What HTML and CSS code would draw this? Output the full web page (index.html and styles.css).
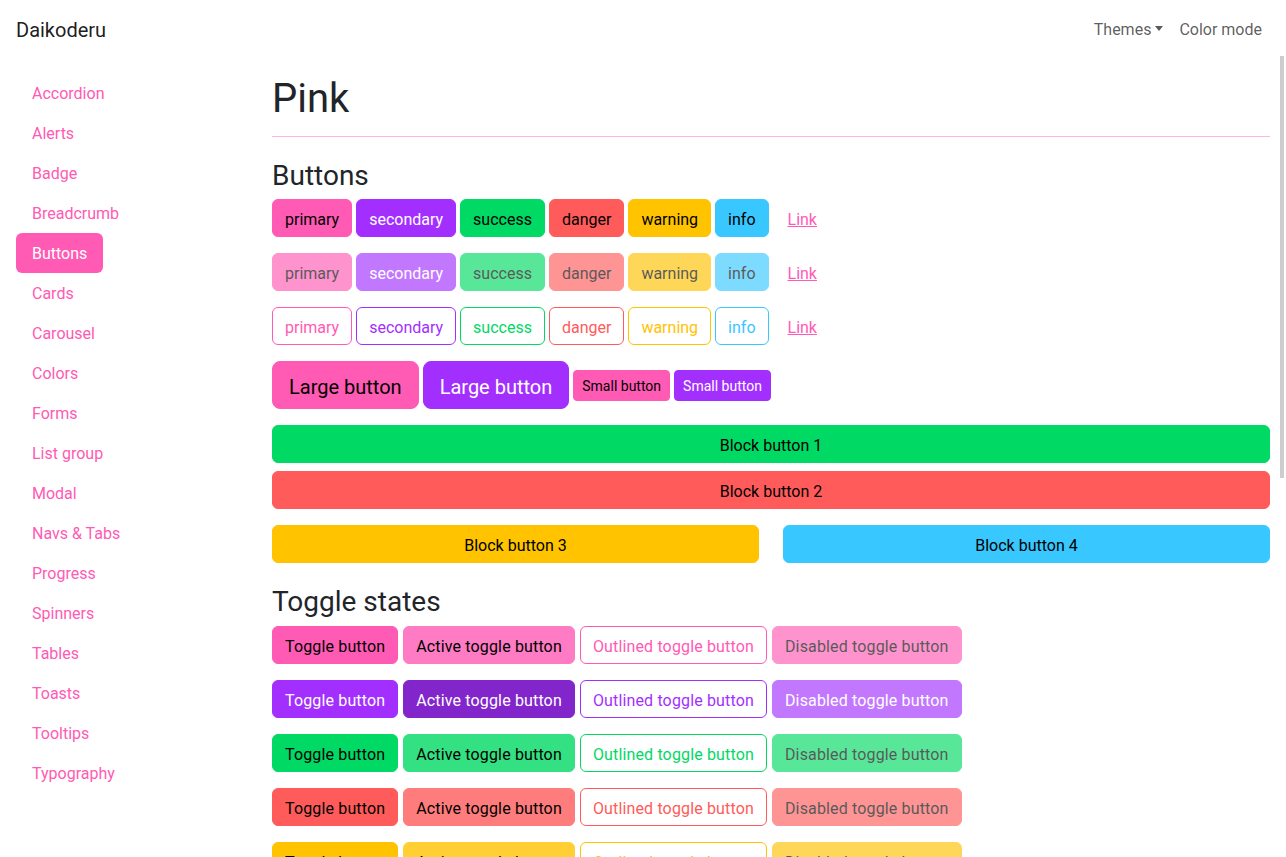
FILE: index.html
```html
<!DOCTYPE html>
<html lang="en">
<head>
<meta charset="utf-8">
<title>Daikoderu – Pink</title>
<link rel="stylesheet" href="styles.css">
</head>
<body>
<header class="navbar">
  <a class="brand" href="#">Daikoderu</a>
  <nav class="topnav">
    <a class="nav-link dropdown-toggle" href="#">Themes</a>
    <a class="nav-link" href="#">Color mode</a>
  </nav>
</header>
<div class="layout">
  <aside class="sidebar">
    <a class="side-link" href="#">Accordion</a>
    <a class="side-link" href="#">Alerts</a>
    <a class="side-link" href="#">Badge</a>
    <a class="side-link" href="#">Breadcrumb</a>
    <a class="side-link active" href="#">Buttons</a>
    <a class="side-link" href="#">Cards</a>
    <a class="side-link" href="#">Carousel</a>
    <a class="side-link" href="#">Colors</a>
    <a class="side-link" href="#">Forms</a>
    <a class="side-link" href="#">List group</a>
    <a class="side-link" href="#">Modal</a>
    <a class="side-link" href="#">Navs &amp; Tabs</a>
    <a class="side-link" href="#">Progress</a>
    <a class="side-link" href="#">Spinners</a>
    <a class="side-link" href="#">Tables</a>
    <a class="side-link" href="#">Toasts</a>
    <a class="side-link" href="#">Tooltips</a>
    <a class="side-link" href="#">Typography</a>
  </aside>
  <main class="content">
    <h1 class="title">Pink</h1>
    <hr class="rule">

    <h3 class="section first">Buttons</h3>
    <div class="btn-row">
      <button class="btn solid c-primary">primary</button>
      <button class="btn solid c-secondary">secondary</button>
      <button class="btn solid c-success">success</button>
      <button class="btn solid c-danger">danger</button>
      <button class="btn solid c-warning">warning</button>
      <button class="btn solid c-info">info</button>
      <a class="btn link" href="#">Link</a>
    </div>
    <div class="btn-row">
      <button class="btn solid c-primary disabled">primary</button>
      <button class="btn solid c-secondary disabled">secondary</button>
      <button class="btn solid c-success disabled">success</button>
      <button class="btn solid c-danger disabled">danger</button>
      <button class="btn solid c-warning disabled">warning</button>
      <button class="btn solid c-info disabled">info</button>
      <a class="btn link" href="#">Link</a>
    </div>
    <div class="btn-row">
      <button class="btn outline c-primary">primary</button>
      <button class="btn outline c-secondary">secondary</button>
      <button class="btn outline c-success">success</button>
      <button class="btn outline c-danger">danger</button>
      <button class="btn outline c-warning">warning</button>
      <button class="btn outline c-info">info</button>
      <a class="btn link" href="#">Link</a>
    </div>
    <div class="btn-row sizes">
      <button class="btn solid c-primary lg">Large button</button>
      <button class="btn solid c-secondary lg">Large button</button>
      <button class="btn solid c-primary sm">Small button</button>
      <button class="btn solid c-secondary sm">Small button</button>
    </div>
    <div class="block-stack">
      <button class="btn solid c-success block">Block button 1</button>
      <button class="btn solid c-danger block">Block button 2</button>
    </div>
    <div class="block-pair">
      <button class="btn solid c-warning block">Block button 3</button>
      <button class="btn solid c-info block">Block button 4</button>
    </div>

    <h3 class="section">Toggle states</h3>
    <div class="btn-row toggles">
      <button class="btn solid c-primary">Toggle button</button>
      <button class="btn solid c-primary act">Active toggle button</button>
      <button class="btn outline c-primary">Outlined toggle button</button>
      <button class="btn solid c-primary disabled">Disabled toggle button</button>
    </div>
    <div class="btn-row toggles">
      <button class="btn solid c-secondary">Toggle button</button>
      <button class="btn solid c-secondary act">Active toggle button</button>
      <button class="btn outline c-secondary">Outlined toggle button</button>
      <button class="btn solid c-secondary disabled">Disabled toggle button</button>
    </div>
    <div class="btn-row toggles">
      <button class="btn solid c-success">Toggle button</button>
      <button class="btn solid c-success act">Active toggle button</button>
      <button class="btn outline c-success">Outlined toggle button</button>
      <button class="btn solid c-success disabled">Disabled toggle button</button>
    </div>
    <div class="btn-row toggles">
      <button class="btn solid c-danger">Toggle button</button>
      <button class="btn solid c-danger act">Active toggle button</button>
      <button class="btn outline c-danger">Outlined toggle button</button>
      <button class="btn solid c-danger disabled">Disabled toggle button</button>
    </div>
    <div class="btn-row toggles">
      <button class="btn solid c-warning">Toggle button</button>
      <button class="btn solid c-warning act">Active toggle button</button>
      <button class="btn outline c-warning">Outlined toggle button</button>
      <button class="btn solid c-warning disabled">Disabled toggle button</button>
    </div>
    <div class="btn-row toggles">
      <button class="btn solid c-info">Toggle button</button>
      <button class="btn solid c-info act">Active toggle button</button>
      <button class="btn outline c-info">Outlined toggle button</button>
      <button class="btn solid c-info disabled">Disabled toggle button</button>
    </div>

    <h3 class="section">Button group</h3>
    <div class="btn-row">
      <button class="btn solid c-primary">Left</button>
      <button class="btn solid c-primary">Middle</button>
      <button class="btn solid c-primary">Right</button>
    </div>
    <div class="btn-row">
      <button class="btn outline c-secondary">Left</button>
      <button class="btn outline c-secondary">Middle</button>
      <button class="btn outline c-secondary">Right</button>
    </div>
    <div class="spacer"></div>
  </main>
  <div class="scroll-thumb" aria-hidden="true"></div>
</div>
</body>
</html>
```

FILE: styles.css
```css
* { box-sizing: border-box; }

html, body {
  margin: 0;
  height: 100%;
}

body {
  font-family: Roboto, "Liberation Sans", sans-serif;
  font-size: 16px;
  line-height: 1.5;
  color: #212529;
  background: #fff;
  display: flex;
  flex-direction: column;
  overflow: hidden;
}

a { text-decoration: none; }

/* Navbar */
.navbar {
  height: 56px;
  flex: 0 0 56px;
  display: flex;
  align-items: center;
  justify-content: space-between;
  padding: 0 16px;
}

.brand {
  font-size: 20px;
  line-height: 30px;
  padding-top: 4px;
  color: rgba(0, 0, 0, 0.9);
}

.topnav {
  display: flex;
  align-items: center;
}

.nav-link {
  color: rgba(0, 0, 0, 0.65);
  padding: 10px 8px 6px;
  line-height: 24px;
}

.dropdown-toggle::after {
  content: "";
  display: inline-block;
  margin-left: 4px;
  vertical-align: 4px;
  border-top: 5px solid;
  border-left: 4px solid transparent;
  border-right: 4px solid transparent;
}

/* Layout */
.layout {
  flex: 1;
  display: flex;
  min-height: 0;
  position: relative;
}

.sidebar {
  flex: 0 0 256px;
  display: flex;
  flex-direction: column;
  align-items: flex-start;
  padding: 17px 0 0 16px;
}

.side-link {
  color: #ff5ab4;
  padding: 9px 16px 7px;
  line-height: 24px;
  border-radius: 6px;
}

.side-link.active {
  background: #ff5ab4;
  color: #fff;
}

.content {
  flex: 1;
  overflow-y: auto;
  scrollbar-width: none;
  padding: 19px 16px 0 16px;
}

.content::-webkit-scrollbar { display: none; }

/* overlay scrollbar indicator of the content pane */
.scroll-thumb {
  position: absolute;
  top: 0;
  right: 2px;
  width: 4px;
  height: 422px;
  background: #cdcdcd;
}

.title {
  font-size: 40px;
  font-weight: 400;
  line-height: 48px;
  margin: 0;
}

.rule {
  border: 0;
  border-top: 1px solid #ffb5df;
  margin: 13px 0 0;
}

.section {
  font-size: 28px;
  font-weight: 400;
  line-height: 33.6px;
  margin: 22px 0 7px;
}

.section.first { margin-top: 21.6px; }

/* Buttons */
.btn-row {
  display: flex;
  align-items: center;
  gap: 4px;
  margin-bottom: 16px;
}

.btn-row.toggles { gap: 5px; }
.btn-row.toggles .btn { letter-spacing: 0.15px; }

.btn {
  font-family: inherit;
  font-size: 16px;
  line-height: 24px;
  padding: 8px 12px 4px;
  border: 1px solid transparent;
  border-radius: 6px;
  background: transparent;
  cursor: pointer;
  white-space: nowrap;
}

.c-primary   { --c: #ff5ab4; --fg: #000; --act: #ff7bc3; }
.c-secondary { --c: #a32fff; --fg: #fff; --act: #8226cc; }
.c-success   { --c: #00d964; --fg: #000; --act: #33e183; }
.c-danger    { --c: #ff5b5b; --fg: #000; --act: #ff7c7c; }
.c-warning   { --c: #ffc300; --fg: #000; --act: #ffcf33; }
.c-info      { --c: #38c8ff; --fg: #000; --act: #60d3ff; }

.btn.solid {
  background: var(--c);
  border-color: var(--c);
  color: var(--fg);
}

.btn.solid.act {
  background: var(--act);
  border-color: var(--act);
}

.btn.outline {
  color: var(--c);
  border-color: var(--c);
}

.btn.disabled { opacity: 0.65; }

.btn.link {
  color: #ff5ab4;
  text-decoration: underline;
  margin-left: 2px;
}

.btn.lg {
  font-size: 20px;
  line-height: 30px;
  padding: 10px 16px 6px;
  border-radius: 8px;
}

.btn.sm {
  font-size: 14px;
  line-height: 21px;
  padding: 5px 8px 3px;
  border-radius: 4px;
}

.block-stack {
  display: flex;
  flex-direction: column;
  gap: 8px;
  margin-bottom: 16px;
}

.block-pair {
  display: grid;
  grid-template-columns: 1fr 1fr;
  gap: 24px;
}

.btn.block {
  width: 100%;
  text-align: center;
}

.spacer { height: 420px; }
```
